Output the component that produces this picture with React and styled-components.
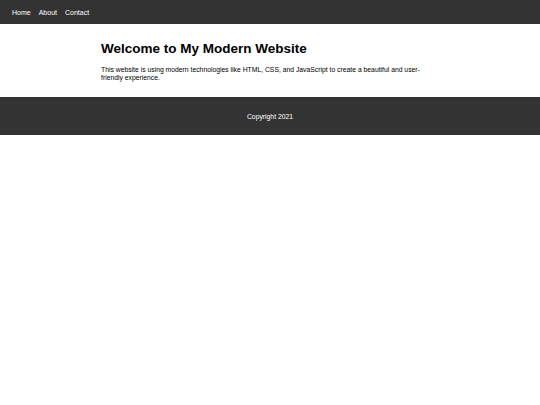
import React from 'react';
import styled, { createGlobalStyle } from 'styled-components';

const GlobalStyle = createGlobalStyle`
  html, body {
    margin: 0;
    padding: 0;
    background: #ffffff;
    font-family: "Liberation Sans", Arial, sans-serif;
  }
`;

const NavBar = styled.nav`
  display: flex;
  align-items: center;
  gap: 8px;
  height: 24px;
  padding: 0 12px;
  background-color: #333333;
`;

const NavLink = styled.a`
  color: #ffffff;
  font-size: 7px;
  text-decoration: none;
`;

const Main = styled.main`
  width: 338px;
  margin: 0 auto;
  padding: 17px 0 15px;
`;

const Title = styled.h1`
  margin: 0 0 10px;
  font-size: 13.5px;
  font-weight: bold;
  color: #000000;
`;

const Text = styled.p`
  margin: 0;
  font-size: 6.8px;
  line-height: 8px;
  color: #000000;
`;

const Footer = styled.footer`
  display: flex;
  align-items: center;
  justify-content: center;
  height: 38px;
  background-color: #333333;
  color: #ffffff;
  font-size: 6.8px;
`;

export default function App() {
  return (
    <>
      <GlobalStyle />
      <NavBar>
        <NavLink href="#">Home</NavLink>
        <NavLink href="#">About</NavLink>
        <NavLink href="#">Contact</NavLink>
      </NavBar>
      <Main>
        <Title>Welcome to My Modern Website</Title>
        <Text>
          This website is using modern technologies like HTML, CSS, and JavaScript to create a beautiful and user-friendly experience.
        </Text>
      </Main>
      <Footer>Copyright 2021</Footer>
    </>
  );
}
